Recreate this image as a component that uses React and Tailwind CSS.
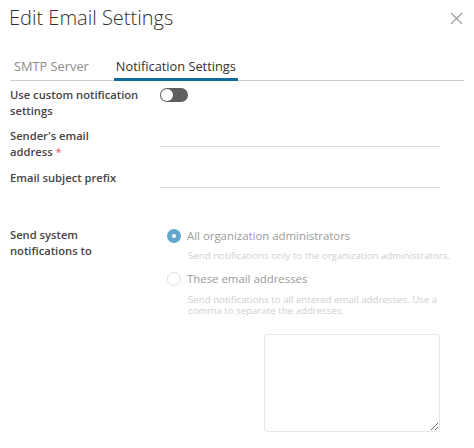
import React, { useState } from 'react'

const font = { fontFamily: '"Open Sans", "Liberation Sans", sans-serif' }

function Toggle({ on, onChange }) {
  return (
    <button
      type="button"
      onClick={() => onChange(!on)}
      className={`relative block w-[28px] h-[14px] rounded-full ${on ? 'bg-[#0079b8]' : 'bg-[#5f5f5f]'}`}
    >
      <span
        className={`absolute top-[1px] w-[12px] h-[12px] rounded-full bg-white ${on ? 'left-[15px]' : 'left-[1px]'}`}
      />
    </button>
  )
}

function Radio({ checked, label, children, helpGap }) {
  return (
    <div>
      <div className="flex items-center gap-[6px] h-[14px]">
        {checked ? (
          <span className="w-[14px] h-[14px] rounded-full bg-[#62a6cc] flex items-center justify-center">
            <span className="w-[4px] h-[4px] rounded-full bg-white" />
          </span>
        ) : (
          <span className="w-[14px] h-[14px] rounded-full border border-[#dedede] bg-white" />
        )}
        <span className="text-[11.4px] text-[#9a9a9a] leading-[14px]">{label}</span>
      </div>
      <div className={`ml-[21px] text-[9.7px] leading-[11px] text-[#cfcfcf] ${helpGap}`}>{children}</div>
    </div>
  )
}

export default function App() {
  const [custom, setCustom] = useState(false)

  return (
    <div className="w-[474px] h-[448px] bg-white overflow-hidden" style={font}>
      {/* Header */}
      <div className="flex items-start justify-between pl-[9px] pr-[11px] pt-[4px]">
        <h1 className="text-[20px] font-light text-[#313131] leading-[28px]">Edit Email Settings</h1>
        <svg width="13" height="13" viewBox="0 0 13 13" className="mt-[8px]">
          <path d="M1 1 L12 12 M12 1 L1 12" stroke="#9a9a9a" strokeWidth="1.1" />
        </svg>
      </div>

      {/* Tabs */}
      <div className="mx-[10px] mt-[25px] flex border-b border-[#cccccc] text-[12.8px] leading-[18px]">
        <div className="px-[4px] pb-[5px] text-[#8c8c8c]">SMTP Server</div>
        <div className="ml-[21px] px-[2px] pb-[2px] border-b-[3px] border-[#0f6a9b] -mb-[1px] text-[#313131]">
          Notification Settings
        </div>
      </div>

      {/* Form */}
      <div className="pl-[10px] text-[11.2px] text-[#454545]">
        <div className="flex mt-[6px]">
          <label className="w-[150px] font-semibold leading-[16px]">
            Use custom notification<br />settings
          </label>
          <div className="pt-[1px]">
            <Toggle on={custom} onChange={setCustom} />
          </div>
        </div>

        <div className="flex mt-[9px]">
          <label className="w-[150px] font-semibold leading-[16px]">
            Sender's email<br />address <span className="text-[#e8736b]">*</span>
          </label>
          <input className="w-[280px] h-[19px] border-b border-[#dddddd] outline-none" />
        </div>

        <div className="flex mt-[10px]">
          <label className="w-[150px] font-semibold leading-[16px]">Email subject prefix</label>
          <input className="w-[280px] h-[18px] border-b border-[#dddddd] outline-none" />
        </div>

        <div className="flex mt-[39px]">
          <label className="w-[150px] font-semibold leading-[16px]">
            Send system<br />notifications to
          </label>
          <div className="pl-[7px] pt-[2px]">
            <Radio checked label="All organization administrators" helpGap="mt-[7px]">
              Send notifications only to the organization administrators.
            </Radio>
            <div className="mt-[11px]">
              <Radio label="These email addresses" helpGap="mt-[8px]">
                <div>Send notifications to all entered email addresses. Use a</div>
                <div>comma to separate the addresses.</div>
              </Radio>
            </div>
          </div>
        </div>

        <div className="pl-[254px] mt-[18px]">
          <textarea className="block w-[176px] h-[98px] border border-[#e6e6e6] rounded-[3px] outline-none resize" />
        </div>
      </div>
    </div>
  )
}
